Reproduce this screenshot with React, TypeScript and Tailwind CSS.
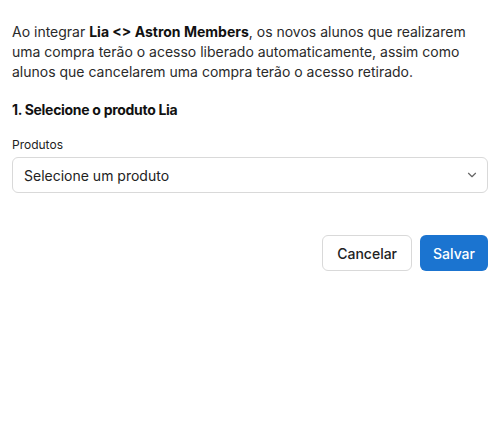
import React from "react";

export default function App() {
  return (
    <div className="w-[502px] h-[440px] bg-white pl-3 pr-[14px] pt-[22px] text-[#1f1f1f]" style={{ fontFamily: "Inter, 'Noto Sans', sans-serif" }}>
      <p className="text-[14px] leading-[20px] text-[#2a2a2a]">
        Ao integrar <b className="font-bold text-[#111]">Lia &lt;&gt; Astron Members</b>, os novos alunos que realizarem uma compra terão o acesso liberado automaticamente, assim como alunos que cancelarem uma compra terão o acesso retirado.
      </p>
      <h3 className="mt-[18px] text-[14px] leading-[20px] font-bold tracking-[-0.3px] text-[#111]">1. Selecione o produto Lia</h3>
      <label className="block mt-[17px] text-[12px] leading-[16px] text-[#222]">Produtos</label>
      <div className="mt-[4px] h-[36px] w-full rounded-[6px] border border-[#d9d9d9] flex items-center justify-between pl-[11px] pr-[8px]">
        <span className="text-[14px] text-[#222]">Selecione um produto</span>
        <svg width="14" height="14" viewBox="0 0 24 24" fill="none" stroke="#666" strokeWidth="2" strokeLinecap="round" strokeLinejoin="round"><path d="m6 9 6 6 6-6" /></svg>
      </div>
      <div className="mt-[42px] flex justify-end gap-[8px]">
        <button className="h-[36px] px-[14px] rounded-[6px] border border-[#d9d9d9] bg-white text-[14px] font-medium text-[#222]">Cancelar</button>
        <button className="h-[36px] px-[13px] rounded-[6px] bg-[#1b74d0] text-[14px] font-medium text-white">Salvar</button>
      </div>
    </div>
  );
}
